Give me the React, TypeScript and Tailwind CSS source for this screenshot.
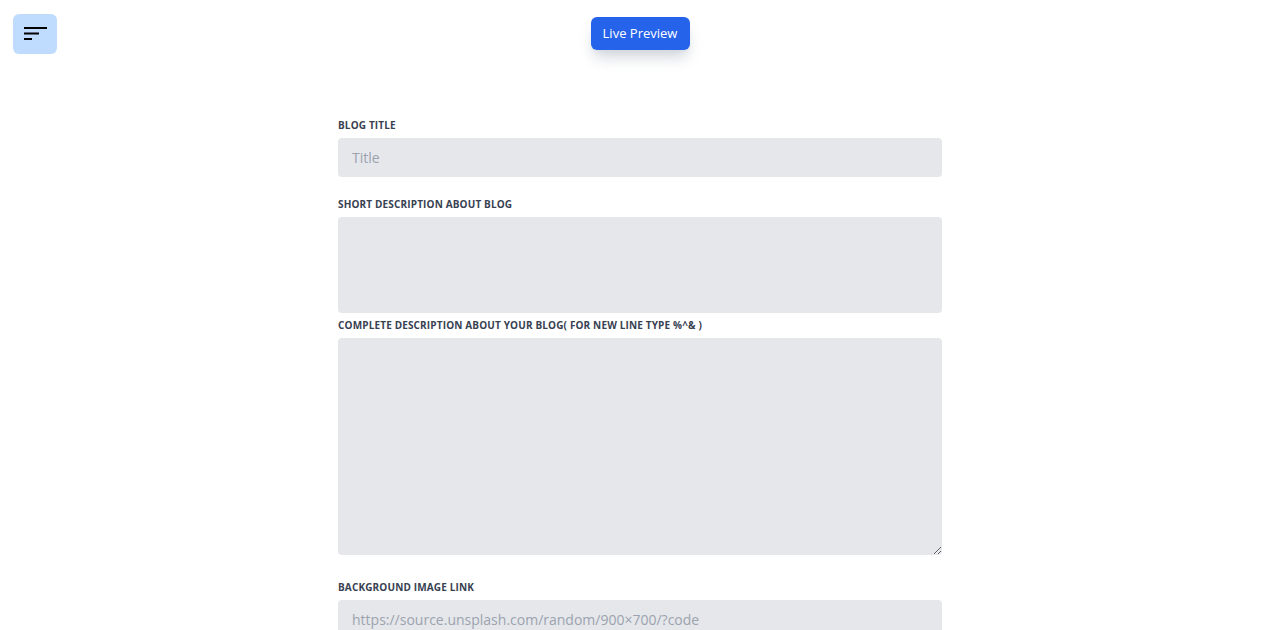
export default function App() {
  return (
    <div className="h-screen overflow-hidden bg-white font-['Open_Sans',sans-serif] text-[#374151]">
      {/* Top bar */}
      <div className="relative h-[60px]">
        <button className="absolute left-[13px] top-[14px] flex h-10 w-11 items-center justify-center rounded-md bg-[#bfdbfe]">
          <svg width="24" height="16" viewBox="0 0 24 16" className="text-black">
            <path d="M1 2h23M1 7.5h15M1 13h8" stroke="currentColor" strokeWidth="2" fill="none" />
          </svg>
        </button>
        <div className="flex justify-center pt-[17px]">
          <button className="h-[33px] w-[99px] rounded-md bg-[#2563eb] text-[13px] text-white shadow-lg shadow-gray-300">
            Live Preview
          </button>
        </div>
      </div>

      {/* Form */}
      <form className="mx-auto mt-[57px] w-[604px]">
        <label className="block text-[10px] font-bold uppercase leading-4 tracking-[0.015em] text-[#374151]">
          Blog Title
        </label>
        <input
          className="mt-[5px] block h-[39px] w-full rounded bg-[#e5e7eb] px-[14px] text-[14px] text-[#374151] placeholder-[#9ca3af] outline-none"
          placeholder="Title"
        />

        <label className="mt-[19px] block text-[10px] font-bold uppercase leading-4 tracking-[0.015em] text-[#374151]">
          Short description about blog
        </label>
        <textarea className="mt-[5px] block h-[96px] w-full resize-none rounded-sm bg-[#e5e7eb] px-[14px] py-2 text-[14px] outline-none" />

        <label className="mt-[4px] block text-[10px] font-bold uppercase leading-4 tracking-[0.015em] text-[#374151]">
          Complete description about your blog( for new line type %^&amp; )
        </label>
        <textarea className="mt-[5px] block h-[217px] w-full rounded-sm bg-[#e5e7eb] px-[14px] py-2 text-[14px] outline-none" />

        <label className="mt-[24px] block text-[10px] font-bold uppercase leading-4 tracking-[0.015em] text-[#374151]">
          Background image link
        </label>
        <input
          className="mt-[5px] block h-[39px] w-full rounded bg-[#e5e7eb] px-[14px] text-[14px] text-[#374151] placeholder-[#9ca3af] outline-none"
          placeholder="https://source.unsplash.com/random/900×700/?code"
        />
      </form>
    </div>
  );
}
